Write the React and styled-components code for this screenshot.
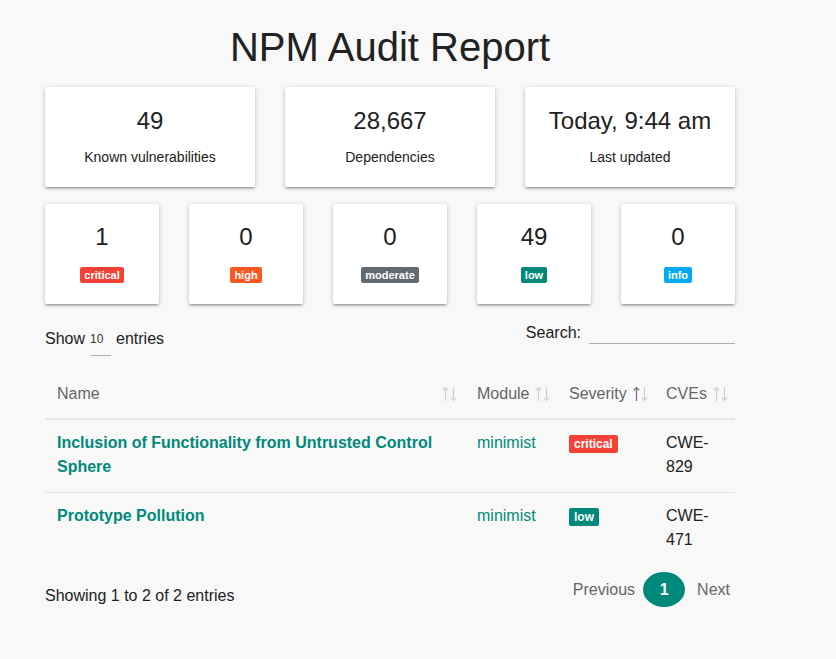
import React from "react";
import styled, { createGlobalStyle } from "styled-components";

const Global = createGlobalStyle`
  html, body { margin: 0; padding: 0; background: #f8f8f8; }
  body {
    font-family: "Liberation Sans", Arial, sans-serif;
    color: #212121;
    font-size: 16px;
  }
`;

const Page = styled.div`
  width: 690px;
  margin-left: 45px;
  padding-top: 23px;
  padding-bottom: 30px;
`;

const Title = styled.h1`
  margin: 0 0 16px;
  font-size: 40px;
  line-height: 48px;
  font-weight: 400;
  text-align: center;
  color: #212121;
`;

const CardGrid = styled.div`
  display: grid;
  grid-template-columns: repeat(${(p) => p.$cols}, 1fr);
  gap: 30px;
  margin-bottom: ${(p) => p.$mb}px;
`;

const Card = styled.div`
  background: #fff;
  height: 100px;
  box-sizing: border-box;
  border-radius: 2px;
  padding-top: ${(p) => p.$pt}px;
  display: flex;
  flex-direction: column;
  align-items: center;
  box-shadow: 0 2px 2px 0 rgba(0, 0, 0, 0.14), 0 3px 1px -2px rgba(0, 0, 0, 0.12),
    0 1px 5px 0 rgba(0, 0, 0, 0.2);
`;

const Big = styled.div`
  font-size: 24px;
  line-height: 28px;
  color: #212121;
`;

const Label = styled.div`
  font-size: 14px;
  line-height: 20px;
  margin-top: 12px;
  color: #212121;
`;

const COLORS = {
  critical: "#f44336",
  high: "#ff5722",
  moderate: "#616a72",
  low: "#00897b",
  info: "#03a9f4",
};

const Badge = styled.span`
  display: inline-block;
  background: ${(p) => COLORS[p.$sev]};
  color: #fff;
  font-weight: 700;
  font-size: ${(p) => (p.$small ? 11 : 12)}px;
  line-height: ${(p) => (p.$small ? 16 : 18)}px;
  padding: 0 ${(p) => (p.$small ? 4 : 5)}px;
  border-radius: 2px;
  margin-top: ${(p) => (p.$small ? 16 : 3)}px;
`;

const Controls = styled.div`
  display: flex;
  justify-content: space-between;
  align-items: flex-start;
  margin-bottom: 14px;
  padding-top: 1px;
`;

const LengthGroup = styled.div`
  display: flex;
  align-items: center;
  height: 34px;
  font-size: 16px;
`;

const Select = styled.div`
  width: 21px;
  height: 34px;
  box-sizing: border-box;
  margin: 0 5px;
  border-bottom: 1px solid #b0b0b0;
  font-size: 12px;
  display: flex;
  align-items: center;
  color: #333;
`;

const SearchGroup = styled.label`
  display: flex;
  align-items: center;
  gap: 8px;
  font-size: 16px;
  height: 22px;
`;

const SearchInput = styled.div`
  width: 146px;
  height: 22px;
  box-sizing: border-box;
  border-bottom: 1px solid #b0b0b0;
`;

const Table = styled.table`
  width: 100%;
  table-layout: fixed;
  border-collapse: collapse;
`;

const Th = styled.th`
  text-align: left;
  font-weight: 400;
  color: #666;
  font-size: 16px;
  line-height: 24px;
  padding: 12px 8px 12px 12px;
  border-bottom: 2px solid #e6e6e6;
`;

const ThInner = styled.div`
  display: flex;
  justify-content: space-between;
  align-items: center;
`;

const SortSvg = styled.svg`
  flex: none;
  margin-left: 6px;
  display: block;
`;

const Tr = styled.tr`
  border-bottom: 1px solid #e2e2e2;
  &:last-child { border-bottom: none; }
`;

const Td = styled.td`
  vertical-align: top;
  font-size: 16px;
  line-height: 24px;
  padding: 11px 12px 13px 12px;
  color: ${(p) => (p.$teal ? "#00897b" : "#212121")};
  font-weight: ${(p) => (p.$bold ? 700 : 400)};
`;

const Footer = styled.div`
  display: flex;
  justify-content: space-between;
  align-items: flex-start;
  margin-top: 7px;
`;

const Info = styled.div`
  margin-top: 12px;
  font-size: 16px;
  line-height: 24px;
`;

const Pager = styled.div`
  display: flex;
  align-items: center;
  height: 35px;
  margin-right: 5px;
`;

const PageLink = styled.span`
  color: #666;
  font-size: 16px;
  margin: ${(p) => p.$m};
`;

const Current = styled.span`
  width: 42px;
  height: 35px;
  border-radius: 50%;
  background: #00897b;
  color: #fff;
  font-weight: 700;
  font-size: 16px;
  display: flex;
  align-items: center;
  justify-content: center;
`;

const SortIcon = ({ active }) => (
  <SortSvg width="15" height="16" viewBox="0 0 15 16" fill="none" strokeWidth="1.2">
    <g stroke={active ? "#7a6682" : "#cfcfcf"}>
      <path d="M3.5 15V1.5M0.8 4.3L3.5 1.5L6.2 4.3" />
    </g>
    <g stroke="#cfcfcf">
      <path d="M11.5 1V14.5M8.8 11.7L11.5 14.5L14.2 11.7" />
    </g>
  </SortSvg>
);

const rows = [
  {
    name: "Inclusion of Functionality from Untrusted Control Sphere",
    module: "minimist",
    sev: "critical",
    cve: ["CWE-", "829"],
  },
  { name: "Prototype Pollution", module: "minimist", sev: "low", cve: ["CWE-", "471"] },
];

export default function App() {
  return (
    <>
      <Global />
      <Page>
        <Title>NPM Audit Report</Title>
        <CardGrid $cols={3} $mb={17}>
          {[
            ["49", "Known vulnerabilities"],
            ["28,667", "Dependencies"],
            ["Today, 9:44 am", "Last updated"],
          ].map(([n, l]) => (
            <Card key={l} $pt={20}>
              <Big>{n}</Big>
              <Label>{l}</Label>
            </Card>
          ))}
        </CardGrid>
        <CardGrid $cols={5} $mb={17}>
          {[
            ["1", "critical"],
            ["0", "high"],
            ["0", "moderate"],
            ["49", "low"],
            ["0", "info"],
          ].map(([n, s]) => (
            <Card key={s} $pt={19}>
              <Big>{n}</Big>
              <Badge $sev={s} $small>
                {s}
              </Badge>
            </Card>
          ))}
        </CardGrid>
        <Controls>
          <LengthGroup>
            Show<Select>10</Select>entries
          </LengthGroup>
          <SearchGroup>
            Search:
            <SearchInput />
          </SearchGroup>
        </Controls>
        <Table>
          <colgroup>
            <col style={{ width: 420 }} />
            <col style={{ width: 92 }} />
            <col style={{ width: 97 }} />
            <col style={{ width: 81 }} />
          </colgroup>
          <thead>
            <tr>
              <Th>
                <ThInner>
                  Name <SortIcon />
                </ThInner>
              </Th>
              <Th>
                <ThInner>
                  Module <SortIcon />
                </ThInner>
              </Th>
              <Th>
                <ThInner>
                  Severity <SortIcon active />
                </ThInner>
              </Th>
              <Th>
                <ThInner>
                  CVEs <SortIcon />
                </ThInner>
              </Th>
            </tr>
          </thead>
          <tbody>
            {rows.map((r) => (
              <Tr key={r.name}>
                <Td $teal $bold>
                  {r.name}
                </Td>
                <Td $teal>{r.module}</Td>
                <Td>
                  <Badge $sev={r.sev}>{r.sev}</Badge>
                </Td>
                <Td>
                  {r.cve[0]}
                  <wbr />
                  {r.cve[1]}
                </Td>
              </Tr>
            ))}
          </tbody>
        </Table>
        <Footer>
          <Info>Showing 1 to 2 of 2 entries</Info>
          <Pager>
            <PageLink $m="0 8px 0 0">Previous</PageLink>
            <Current>1</Current>
            <PageLink $m="0 0 0 12px">Next</PageLink>
          </Pager>
        </Footer>
      </Page>
    </>
  );
}
